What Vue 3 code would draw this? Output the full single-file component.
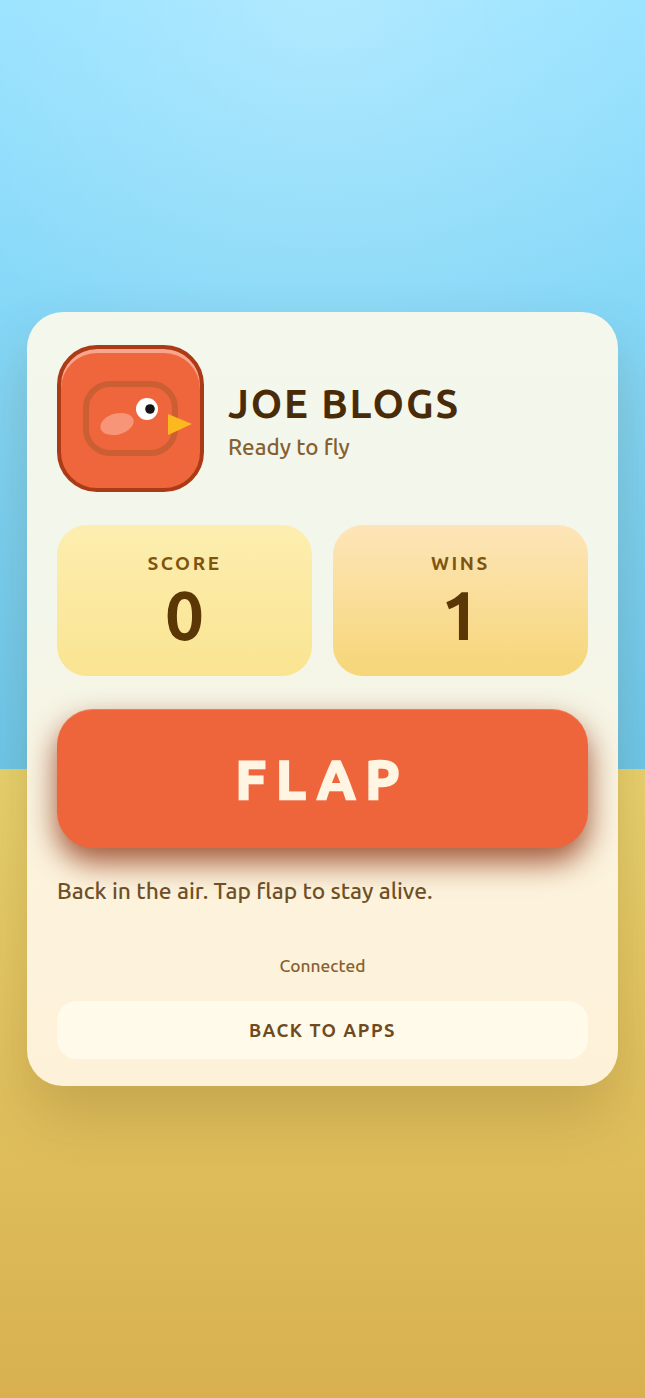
<template>
  <main class="screen">
    <section class="card">
      <header class="player">
        <div class="avatar">
          <svg class="bird" viewBox="0 0 110 76" width="110" height="76">
            <rect x="3" y="3" width="89" height="69" rx="24" fill="none" stroke="#cb5f33" stroke-width="6" />
            <ellipse cx="34" cy="43" rx="17" ry="10.5" transform="rotate(-15 34 43)" fill="#f69578" />
            <circle cx="64" cy="28" r="11" fill="#fff" />
            <circle cx="67" cy="28" r="4.8" fill="#151515" />
            <polygon points="85,33 109,43 85,54" fill="#fbb81f" />
          </svg>
        </div>
        <div class="who">
          <h1>{{ name }}</h1>
          <p>{{ status }}</p>
        </div>
      </header>

      <div class="stats">
        <div v-for="stat in stats" :key="stat.label" class="stat" :class="stat.kind">
          <span class="label">{{ stat.label }}</span>
          <strong>{{ stat.value }}</strong>
        </div>
      </div>

      <button class="flap">FLAP</button>
      <p class="message">Back in the air. Tap flap to stay alive.</p>
      <p class="connection">Connected</p>
      <button class="back">BACK TO APPS</button>
    </section>
  </main>
</template>

<script setup>
const name = 'JOE BLOGS';
const status = 'Ready to fly';
const stats = [
  { label: 'SCORE', value: 0, kind: 'score' },
  { label: 'WINS', value: 1, kind: 'wins' },
];
</script>

<style>
html, body { margin: 0; }
</style>

<style scoped>
.screen {
  height: 1398px;
  display: flex;
  align-items: center;
  justify-content: center;
  box-sizing: border-box;
  font-family: "Ubuntu", "Noto Sans", sans-serif;
  background:
    radial-gradient(circle at 50% 0, rgba(255, 255, 255, 0.25), rgba(255, 255, 255, 0) 30%),
    linear-gradient(180deg, #96e2ff 0%, #6dc8ec 55%, #e9d26e 55%, #d8b04f 100%);
}

.card {
  width: 591px;
  height: 774px;
  box-sizing: border-box;
  padding: 33px 30px 27px;
  border-radius: 36px;
  background: linear-gradient(180deg, #f3f7ec 0%, #f3f6ea 40%, #fdf3dc 75%, #fdf1da 100%);
  box-shadow: 0 30px 60px rgba(90, 60, 10, 0.2);
  display: flex;
  flex-direction: column;
}

.player {
  display: flex;
  align-items: center;
  gap: 24px;
}

.avatar {
  width: 147px;
  height: 147px;
  box-sizing: border-box;
  border: 4px solid #ab3b16;
  border-radius: 40px;
  background: #ef663c;
  box-shadow: inset 0 4px 0 #f9a48c;
  position: relative;
  flex: none;
}

.bird {
  position: absolute;
  left: 22px;
  top: 32px;
  overflow: visible;
}

.who {
  padding-top: 4px;
}

.who h1 {
  margin: 0;
  font-size: 40px;
  line-height: 48px;
  font-weight: 700;
  letter-spacing: 1.9px;
  color: #4a2b08;
}

.who p {
  margin: 4px 0 0;
  font-size: 22.4px;
  line-height: 30px;
  font-weight: 500;
  color: #86602f;
}

.stats {
  display: grid;
  grid-template-columns: 1fr 1fr;
  gap: 21px;
  margin-top: 33px;
}

.stat {
  height: 151px;
  border-radius: 30px;
  display: flex;
  flex-direction: column;
  align-items: center;
  padding-top: 26px;
  box-sizing: border-box;
}

.stat.score { background: linear-gradient(180deg, #fdeeb0, #fae491); }
.stat.wins { background: linear-gradient(180deg, #fde5b8, #f6d678); }

.label {
  font-size: 19px;
  line-height: 24px;
  letter-spacing: 2.6px;
  font-weight: 700;
  color: #7d5510;
}

.stat strong {
  font-size: 69px;
  line-height: 80px;
  font-weight: 700;
  color: #5c3706;
}

.flap {
  margin-top: 33px;
  height: 139px;
  border: 0;
  border-radius: 36px;
  background: #ee653c;
  color: #fff5e2;
  font-family: inherit;
  font-size: 54px;
  font-weight: 700;
  letter-spacing: 10px;
  -webkit-text-stroke: 2.5px #fff5e2;
  box-shadow: 0 14px 30px rgba(140, 45, 12, 0.8), inset 0 1px 0 rgba(255, 255, 255, 0.15);
}

.message {
  margin: 28px 0 0;
  font-size: 22.8px;
  line-height: 30px;
  font-weight: 500;
  color: #6f4f26;
}

.connection {
  margin: 48px 0 0;
  text-align: center;
  font-size: 17.4px;
  line-height: 24px;
  font-weight: 500;
  color: #86602f;
}

.back {
  margin-top: 23px;
  height: 58px;
  border: 0;
  border-radius: 20px;
  background: #fffaea;
  color: #6f4a1e;
  font-family: inherit;
  font-size: 18.4px;
  font-weight: 700;
  letter-spacing: 1.5px;
}
</style>
